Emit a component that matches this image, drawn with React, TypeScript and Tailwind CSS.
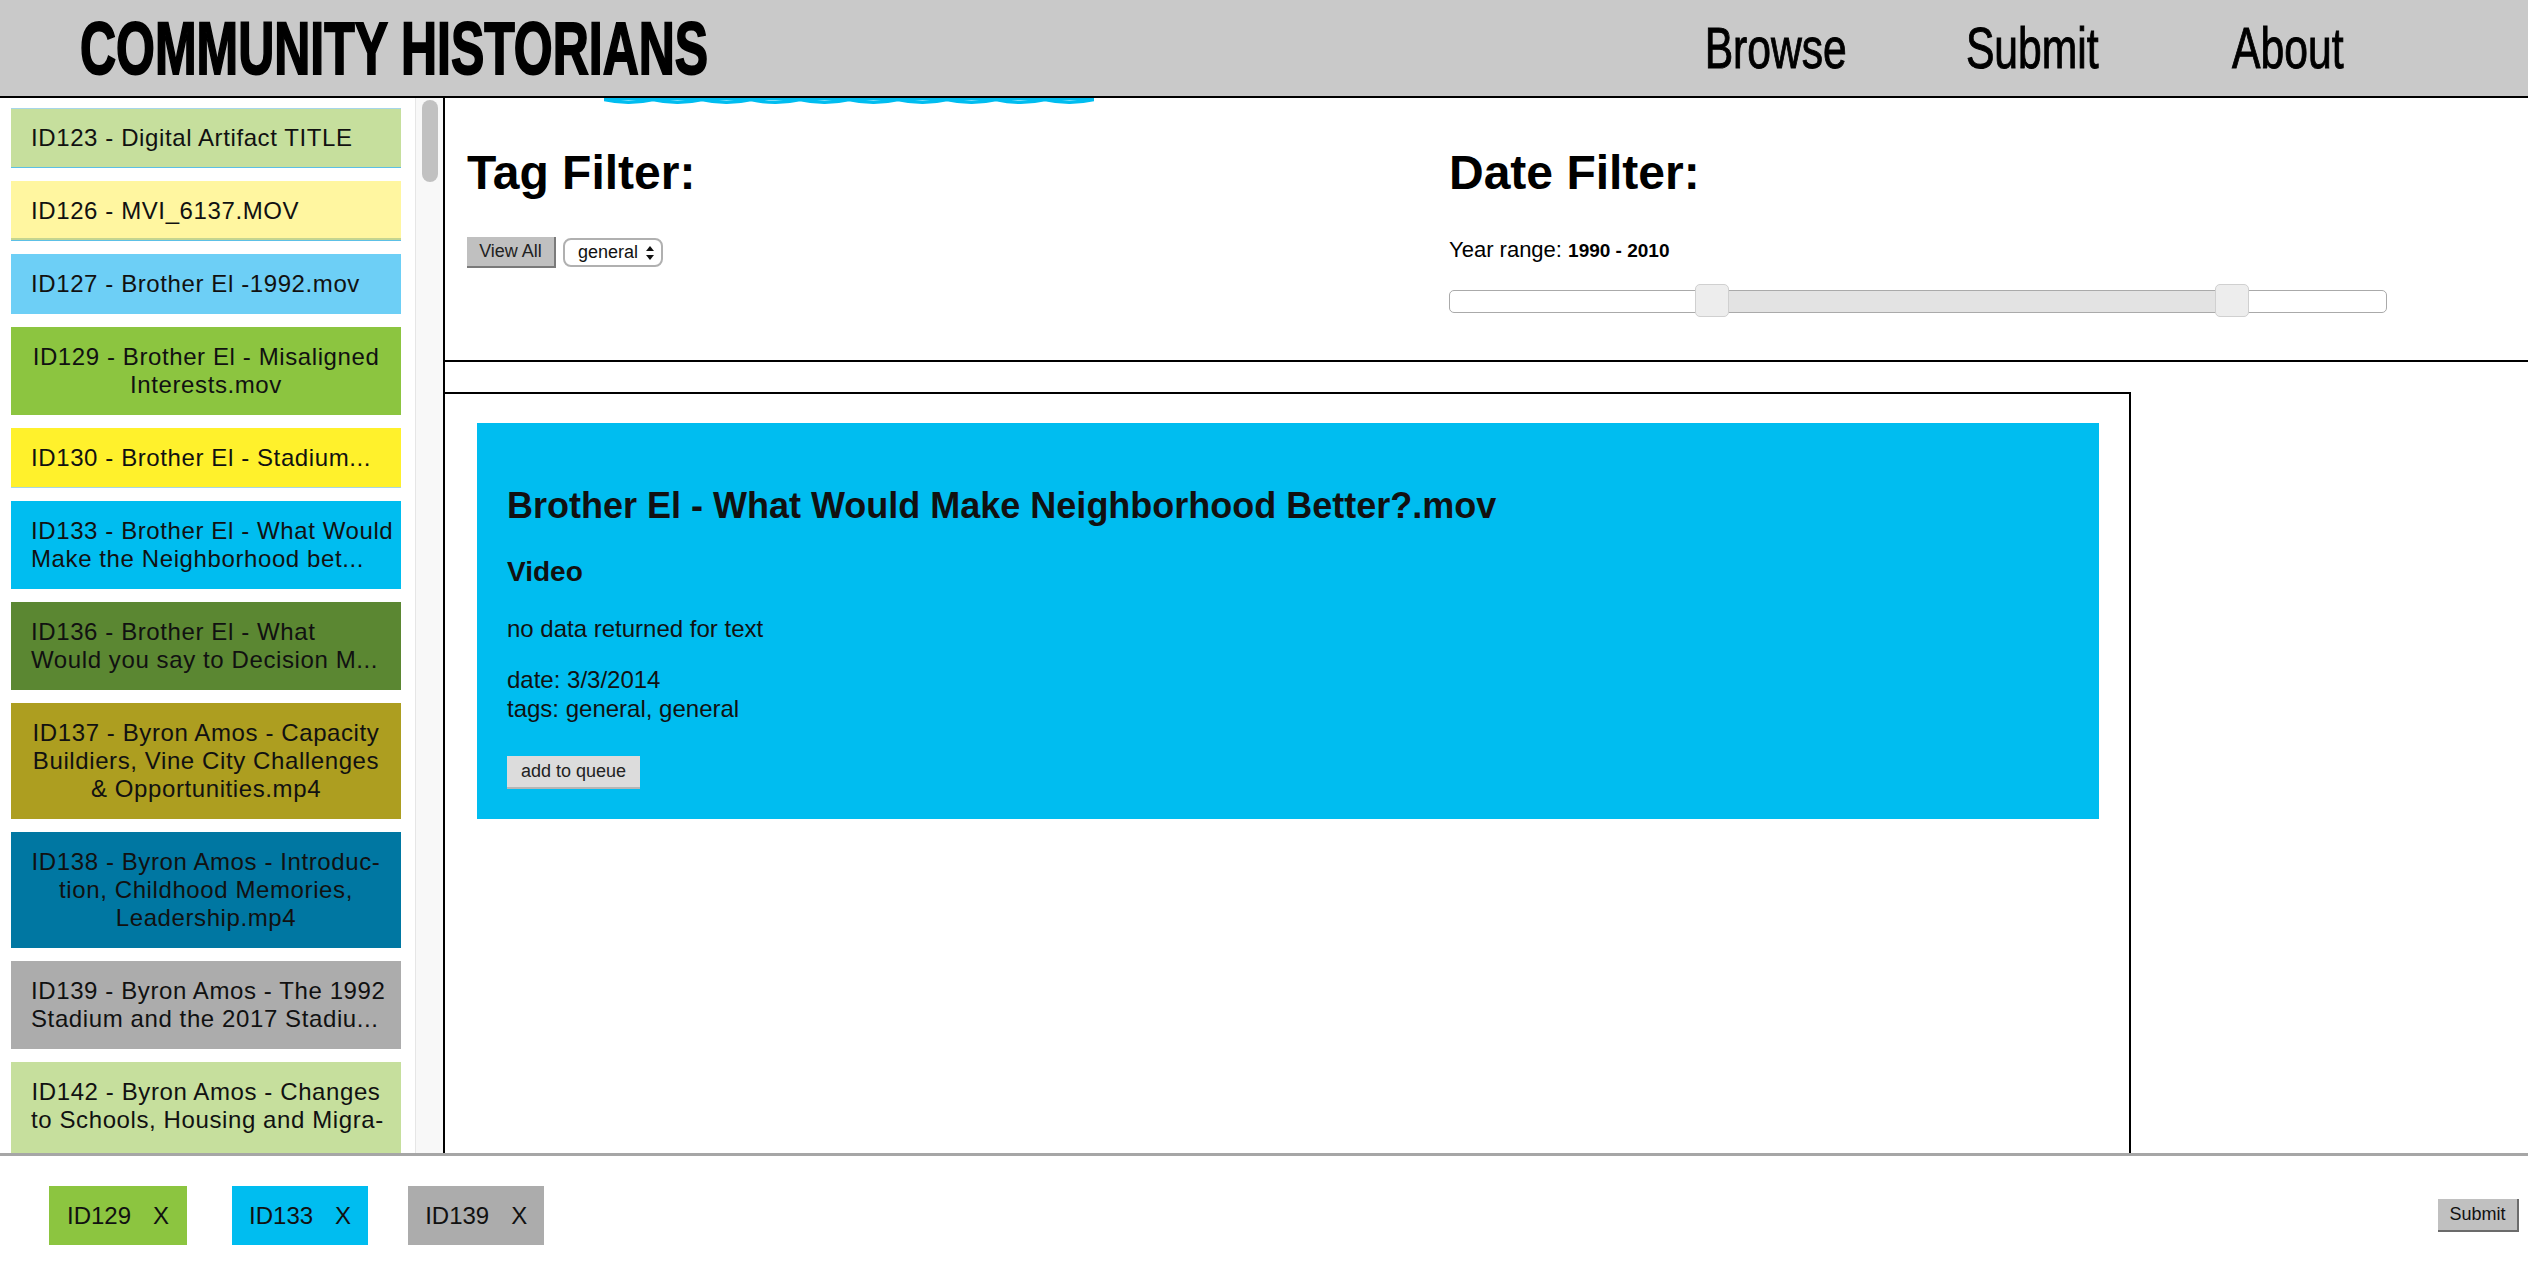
import React from "react";

type Artifact = {
  color: string;
  lines: string[];
  align: "left" | "center";
  edge?: string;
};

const artifacts: Artifact[] = [
  {
    color: "bg-[#c6df9d]",
    lines: ["ID123 - Digital Artifact TITLE"],
    align: "left",
    edge: "shadow-[inset_0_1px_0_#a6d6e8,inset_0_-1px_0_#5cc0e6]",
  },
  {
    color: "bg-[#fff6a0]",
    lines: ["ID126 - MVI_6137.MOV"],
    align: "left",
    edge: "shadow-[inset_0_-1px_0_#5cc0e6,inset_0_-3px_0_#c4d590]",
  },
  { color: "bg-[#6dcff6]", lines: ["ID127 - Brother El -1992.mov"], align: "left" },
  { color: "bg-[#8cc540]", lines: ["ID129 - Brother El - Misaligned", "Interests.mov"], align: "center" },
  {
    color: "bg-[#fff12c]",
    lines: ["ID130 - Brother El - Stadium..."],
    align: "left",
    edge: "shadow-[inset_0_-1px_0_#a9d6e6]",
  },
  { color: "bg-[#00bdf0]", lines: ["ID133 - Brother El - What Would", "Make the Neighborhood bet..."], align: "left" },
  { color: "bg-[#5b8732]", lines: ["ID136 - Brother El - What", "Would you say to Decision M..."], align: "left" },
  {
    color: "bg-[#ad9e20]",
    lines: ["ID137 - Byron Amos - Capacity", "Buildiers, Vine City Challenges", "& Opportunities.mp4"],
    align: "center",
  },
  {
    color: "bg-[#0077a2]",
    lines: ["ID138 - Byron Amos - Introduc-", "tion, Childhood Memories,", "Leadership.mp4"],
    align: "center",
  },
  { color: "bg-[#acacac]", lines: ["ID139 - Byron Amos - The 1992", "Stadium and the 2017 Stadiu..."], align: "left" },
  {
    color: "bg-[#c6df9d]",
    lines: ["ID142 - Byron Amos - Changes", "to Schools, Housing and Migra-"],
    align: "center",
  },
];

const queue = [
  { id: "ID129", color: "bg-[#8cc540]", gap: "mr-[45px] px-[18px]" },
  { id: "ID133", color: "bg-[#00bdf0]", gap: "mr-[40px] px-[17px]" },
  { id: "ID139", color: "bg-[#acacac]", gap: "px-[17px]" },
];

// scalloped edge peeking out under the header
const Wave: React.FC = () => {
  let d = "M0 1.5";
  for (let i = 0; i < 10; i++) {
    const x = i * 49;
    d += ` Q${x + 24.5} 7 ${x + 49} 1.5`;
  }
  return (
    <svg className="ml-[159px] block h-[6px] w-[490px] shrink-0" viewBox="0 0 490 6">
      <path d={d} fill="none" stroke="#00bdf0" strokeWidth="3.5" />
      <rect x="0" y="0" width="490" height="2" fill="#00bdf0" />
    </svg>
  );
};

const SelectArrows: React.FC = () => (
  <svg width="8" height="14" viewBox="0 0 8 14" className="ml-[8px]">
    <path d="M4 0 L8 5 H0 Z" fill="#111" />
    <path d="M4 14 L8 9 H0 Z" fill="#111" />
  </svg>
);

const Sidebar: React.FC = () => (
  <div className="flex w-[415px] shrink-0 flex-col gap-[13px] overflow-hidden pt-[10px]">
    {artifacts.map((item, i) => (
      <div
        key={item.lines[0]}
        className={`ml-[11px] w-[390px] shrink-0 px-[20px] pt-[16px] text-[24px] leading-[28px] tracking-[0.6px] whitespace-nowrap text-[#111] ${item.color} ${item.edge ?? ""} ${item.align === "center" ? "text-center" : "text-left"} ${i === artifacts.length - 1 ? "pb-[40px]" : "pb-[16px]"}`}
      >
        {item.lines.map((line) => (
          <div key={line}>{line}</div>
        ))}
      </div>
    ))}
  </div>
);

const ScrollTrack: React.FC = () => (
  <div className="w-[28px] shrink-0 border-l border-[#e6e6e6] bg-[#f8f8f8]">
    <div className="ml-[6px] mt-[2px] h-[82px] w-[16px] rounded-full bg-[#c1c1c1]" />
  </div>
);

const Filters: React.FC = () => (
  <section className="flex h-[264px] shrink-0 flex-col border-b-2 border-black">
    <Wave />
    <div className="mt-[41px] flex pl-[22px]">
      <div className="w-[982px] shrink-0">
        <h1 className="text-[48px] font-bold leading-[55px]">Tag Filter:</h1>
        <div className="mt-[37px] flex items-center gap-[7px]">
          <button className="h-[31px] w-[89px] border-r-2 border-b-2 border-[#7a7a7a] bg-[#c0c0c0] text-[18px] text-[#222]">
            View All
          </button>
          <div className="flex h-[29px] w-[100px] items-center rounded-[8px] border-2 border-[#b0b0b0] bg-white pl-[13px] text-[18px] text-[#111]">
            general
            <SelectArrows />
          </div>
        </div>
      </div>
      <div className="flex flex-col">
        <h1 className="text-[48px] font-bold leading-[55px]">Date Filter:</h1>
        <div className="mt-[37px] text-[22px] leading-[25px]">
          Year range: <span className="text-[19px] font-bold">1990 - 2010</span>
        </div>
        <div className="relative mt-[27px] h-[23px] w-[938px] rounded-[5px] border-[1.5px] border-[#aaaaaa] bg-white">
          <div className="absolute top-0 bottom-0 left-[262px] w-[520px] bg-[#e3e3e3]" />
          <div className="absolute top-[-7px] left-[245px] h-[33px] w-[34px] rounded-[5px] border border-[#d0d0d0] bg-[#ededed]" />
          <div className="absolute top-[-7px] left-[765px] h-[33px] w-[34px] rounded-[5px] border border-[#d0d0d0] bg-[#ededed]" />
        </div>
      </div>
    </div>
  </section>
);

const Card: React.FC = () => (
  <div className="bg-[#00bdf0] pt-[62px] pr-[30px] pb-[30px] pl-[30px] text-[#111]">
    <h2 className="text-[36px] font-bold leading-[41px]">Brother El - What Would Make Neighborhood Better?.mov</h2>
    <h3 className="mt-[30px] text-[28px] font-bold leading-[32px]">Video</h3>
    <p className="mt-[26px] text-[24px] leading-[29px]">no data returned for text</p>
    <div className="mt-[22px] text-[24px] leading-[29px]">
      <div>date: 3/3/2014</div>
      <div>tags: general, general</div>
    </div>
    <button className="mt-[33px] h-[33px] w-[133px] border-b-2 border-[#b5b5b5] bg-[#dcdcdc] text-[18px] text-[#222]">
      add to queue
    </button>
  </div>
);

export default function App() {
  return (
    <div className="flex h-screen w-full flex-col overflow-hidden bg-white font-['Liberation_Sans',Arial,sans-serif] text-black">
      <header className="flex h-[98px] shrink-0 items-center border-b-2 border-black bg-[#c9c9c9]">
        <div className="ml-[80px] origin-left scale-x-[0.666] text-[75px] leading-none font-bold whitespace-nowrap [-webkit-text-stroke:2px_black]">
          COMMUNITY HISTORIANS
        </div>
        <nav className="mr-[112px] ml-auto flex">
          {["Browse", "Submit", "About"].map((name) => (
            <a key={name} className="flex w-[256px] justify-center">
              <span className="scale-x-[0.735] text-[58px] leading-none whitespace-nowrap [-webkit-text-stroke:1px_black]">
                {name}
              </span>
            </a>
          ))}
        </nav>
      </header>

      <div className="flex min-h-0 flex-1">
        <Sidebar />
        <ScrollTrack />
        <main className="flex min-w-0 flex-1 flex-col border-l-2 border-black">
          <Filters />
          <div className="mt-[30px] w-[1686px] flex-1 border-t-2 border-r-2 border-black pt-[29px] pr-[30px] pl-[32px]">
            <Card />
          </div>
        </main>
      </div>

      <footer className="flex h-[113px] shrink-0 items-start border-t-[3px] border-[#a6a6a6] pt-[30px] pr-[9px] pl-[49px]">
        <div className="flex h-[59px] items-center">
          {queue.map((q) => (
            <div key={q.id} className={`flex h-[59px] items-center text-[24px] text-[#111] ${q.color} ${q.gap}`}>
              <span>{q.id}</span>
              <span className="ml-[22px]">X</span>
            </div>
          ))}
        </div>
        <div className="ml-auto flex h-[59px] items-center">
          <button className="h-[33px] w-[81px] border-r-2 border-b-2 border-[#6b6b6b] bg-[#c0c0c0] text-[18px] text-[#111]">
            Submit
          </button>
        </div>
      </footer>
    </div>
  );
}
